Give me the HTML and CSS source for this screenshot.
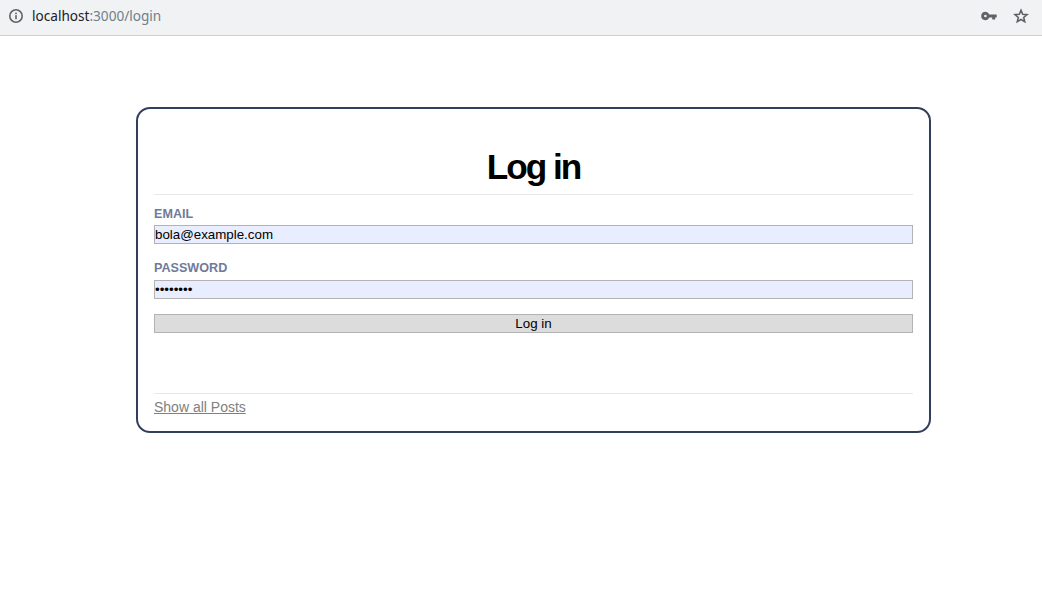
FILE: index.html
```html
<!DOCTYPE html>
<html lang="en">
<head>
  <meta charset="UTF-8">
  <title>Log in</title>
  <link rel="stylesheet" href="styles.css">
</head>
<body>
  <div class="toolbar">
    <svg class="icon-info" width="16" height="16" viewBox="0 0 16 16">
      <circle cx="8" cy="8" r="6.2" fill="none" stroke="#5f6368" stroke-width="1.6"/>
      <rect x="7.2" y="7.2" width="1.6" height="4" fill="#5f6368"/>
      <rect x="7.2" y="4.6" width="1.6" height="1.6" fill="#5f6368"/>
    </svg>
    <div class="url"><span class="host">localhost</span>:3000/login</div>
    <svg class="icon-key" width="16" height="16" viewBox="0 0 16 16">
      <path fill="#5f6368" fill-rule="evenodd" d="M4.4 3.8a4.2 4.2 0 0 1 3.9 2.6h7.4v3.2h-1.5v2h-3v-2H8.3a4.2 4.2 0 1 1-3.9-5.8zm0 2.9a1.3 1.3 0 1 0 0 2.6 1.3 1.3 0 0 0 0-2.6z"/>
    </svg>
    <svg class="icon-star" width="16" height="16" viewBox="0 0 16 16">
      <path fill="none" stroke="#5f6368" stroke-width="1.6" stroke-linejoin="miter" d="M8 2.2l1.7 4 4.3.4-3.3 2.9 1 4.2L8 11.5l-3.7 2.2 1-4.2L2 6.6l4.3-.4z"/>
    </svg>
  </div>

  <div class="card">
    <h1 class="title">Log in</h1>
    <form class="login-form">
      <label class="field-label" for="email">Email</label>
      <input class="field-input" id="email" type="text" value="bola@example.com">
      <label class="field-label" for="password">Password</label>
      <input class="field-input" id="password" type="password" value="password">
      <button class="submit-btn" type="button">Log in</button>
    </form>
    <div class="card-footer">
      <a class="footer-link" href="#">Show all Posts</a>
    </div>
  </div>
</body>
</html>
```

FILE: styles.css
```css
body {
  margin: 0;
  padding: 0;
  font-family: "Liberation Sans", Arial, sans-serif;
  background: #fff;
  color: #000;
}
.toolbar {
  display: flex;
  align-items: center;
  height: 32px;
  padding: 0 13px 3px 8px;
  background: #f0f2f3;
  border-bottom: 1px solid #cfd0d1;
}
.url {
  flex-grow: 1;
  margin: 0 0 2px 8px;
  font-family: "Noto Sans", "Open Sans", sans-serif;
  font-size: 13.6px;
  color: #6f7f8c;
}
.host {
  color: #1c2024;
}
.icon-key {
  margin-right: 16px;
}
.card {
  margin: 71px 0 0 136px;
  padding: 0 16px;
  width: 759px;
  height: 322px;
  border: 2px solid #323f5c;
  border-radius: 14px;
  display: flex;
  flex-direction: column;
}
.title {
  margin: 0;
  padding: 37px 0 6px;
  text-align: center;
  font-size: 35.2px;
  line-height: 42px;
  font-weight: bold;
  letter-spacing: -2px;
  border-bottom: 1px solid #e8e8e8;
}
.login-form {
  flex-grow: 1;
  display: flex;
  flex-direction: column;
}
.field-label {
  margin-top: 11.5px;
  font-size: 12.6px;
  line-height: 14.7px;
  font-weight: bold;
  text-transform: uppercase;
  color: #6f7b9c;
}
.field-input {
  height: 19px;
  margin: 3.9px 0 5.5px;
  padding: 0;
  box-sizing: border-box;
  border: 1px solid #b3b3b3;
  background: #e8edff;
  font-family: "Liberation Sans", Arial, sans-serif;
  font-size: 13.33px;
  color: #000;
}
.submit-btn {
  height: 19px;
  margin-top: 9.8px;
  padding: 0;
  border: 1px solid #b3b3b3;
  background: #dcdcdc;
  font-family: "Liberation Sans", Arial, sans-serif;
  font-size: 13.33px;
  color: #000;
}
.card-footer {
  height: 38px;
  border-top: 1px solid #e8e8e8;
  padding-top: 4px;
  box-sizing: border-box;
}
.footer-link {
  font-size: 14px;
  line-height: 16px;
  color: #808080;
}
```
